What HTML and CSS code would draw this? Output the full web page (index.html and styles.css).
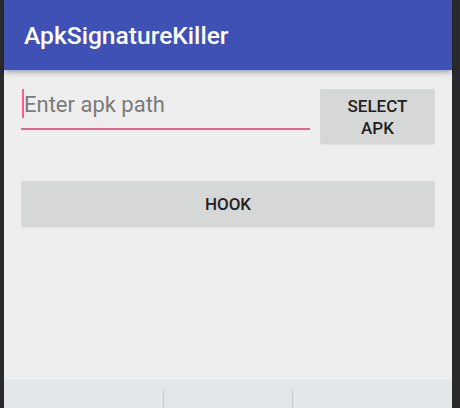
FILE: index.html
```html
<!DOCTYPE html>
<html>
<head>
<meta charset="utf-8">
<link rel="stylesheet" href="styles.css">
</head>
<body>
<div class="frame">
  <div class="edge-left"></div>
  <div class="screen">
    <header class="appbar"><span class="title">ApkSignatureKiller</span></header>
    <main class="content">
      <div class="row">
        <div class="field">
          <span class="cursor"></span><span class="placeholder">Enter apk path</span>
        </div>
        <button class="btn btn-select">SELECT<br>APK</button>
      </div>
      <button class="btn btn-hook">HOOK</button>
    </main>
    <footer class="navbar">
      <span class="divider d1"></span>
      <span class="divider d2"></span>
    </footer>
  </div>
  <div class="edge-right"></div>
</div>
</body>
</html>
```
FILE: styles.css
```css
html, body {
  margin: 0;
  padding: 0;
  width: 460px;
  height: 408px;
  overflow: hidden;
  font-family: Roboto, "Liberation Sans", sans-serif;
}
.frame {
  display: flex;
  width: 460px;
  height: 408px;
}
.edge-left {
  width: 4px;
  background: #2b2b2e;
}
.edge-right {
  width: 8px;
  background: #2b2b2e;
}
.screen {
  width: 448px;
  display: flex;
  flex-direction: column;
  background: #eeeeee;
}
.appbar {
  height: 70px;
  flex: none;
  background: #3f51b5;
  display: flex;
  align-items: center;
  padding-left: 20px;
  box-shadow: 0 2px 6px rgba(0,0,0,0.35);
  position: relative;
  z-index: 1;
}
.title {
  color: #ffffff;
  font-size: 24.6px;
  font-weight: 500;
}
.content {
  flex: 1;
  padding: 19px 17px 0 17px;
  display: flex;
  flex-direction: column;
}
.row {
  display: flex;
  gap: 10px;
  align-items: flex-start;
}
.field {
  flex: 1;
  height: 39px;
  border-bottom: 2px solid #e2668c;
  display: flex;
  align-items: flex-start;
}
.cursor {
  width: 2px;
  height: 29px;
  margin-left: 1px;
  background: #ff4081;
  opacity: 0.85;
}
.placeholder {
  color: #7b7b7b;
  font-size: 22px;
  line-height: 32px;
  margin-left: 0px;
}
.btn {
  border: none;
  border-radius: 2px;
  background: #d6d7d7;
  color: #222222;
  font-family: Roboto, "Liberation Sans", sans-serif;
  font-weight: 500;
  font-size: 17px;
  padding: 0;
}
.btn-select {
  width: 115px;
  height: 55px;
  line-height: 22px;
  box-shadow: 0 1px 1px rgba(0,0,0,0.06);
}
.btn-hook {
  margin-top: 37px;
  height: 46px;
  width: 100%;
  box-shadow: 0 1px 1px rgba(0,0,0,0.06);
}
.navbar {
  height: 29px;
  flex: none;
  background: #e2e6e9;
  border-top: 1px solid #e6e8ea;
  box-sizing: border-box;
  position: relative;
}
.divider {
  position: absolute;
  top: 10px;
  bottom: 0;
  width: 1px;
  background: #c4c6c8;
}
.d1 { left: 159px; }
.d2 { left: 288px; }
```
